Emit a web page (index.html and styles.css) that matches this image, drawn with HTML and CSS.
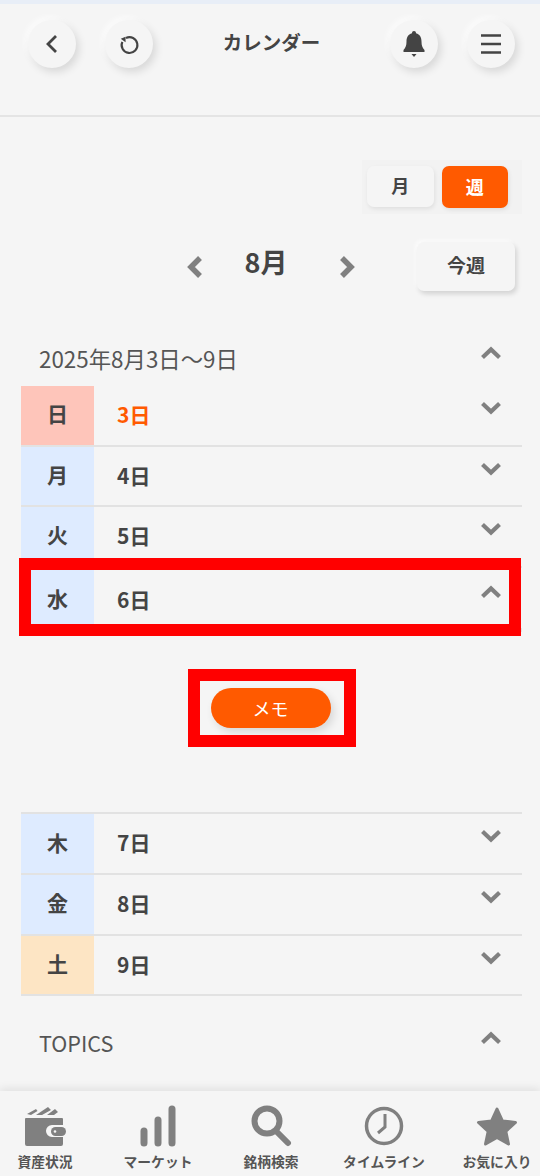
FILE: index.html
```html
<!DOCTYPE html>
<html lang="ja">
<head>
    <meta charset="UTF-8">
    <meta name="viewport" content="width=device-width, initial-scale=1.0">
    <title>カレンダー</title>
    <link rel="stylesheet" href="styles.css">
</head>
<body>
    <div class="top-strip"></div>
    <header class="header">
        <button class="round-btn">
            <svg width="16" height="22" viewBox="0 0 16 22"><path d="M12 3 4 11l8 8" fill="none" stroke="#444" stroke-width="2.800"/></svg>
        </button>
        <button class="round-btn">
            <svg width="21" height="21" viewBox="0 0 24 24"><path d="M8 4.600A9 9 0 1 1 3.800 9" fill="none" stroke="#444" stroke-width="2.400"/><path d="M2 5.500 7.500 3 7.500 9.500Z" fill="#444"/></svg>
        </button>
        <h1 class="title">カレンダー</h1>
        <button class="round-btn">
            <svg width="24" height="30" viewBox="0 0 24 30"><path d="M12 2c1.200 0 2 .8 2 2.200 4 1 5.500 4.300 5.500 8.300 0 4 .8 6 3 8.500v2H1.500v-2c2.200-2.500 3-4.500 3-8.500 0-4 1.500-7.300 5.500-8.300C10 2.800 10.800 2 12 2Z" fill="#444"/><path d="M9.500 25h5l-2.500 3Z" fill="#444"/></svg>
        </button>
        <button class="round-btn">
            <svg width="22" height="22" viewBox="0 0 22 22"><path d="M1 2.500h20M1 11h20M1 19.500h20" stroke="#444" stroke-width="2.400"/></svg>
        </button>
    </header>

    <main class="content">
        <div class="toggle">
            <div class="toggle-btn">月</div>
            <div class="toggle-btn active">週</div>
        </div>

        <div class="month-nav">
            <svg class="month-arrow" width="20" height="26" viewBox="0 0 20 26"><path d="M15 4 6 13l9 9" fill="none" stroke="#808080" stroke-width="5.500"/></svg>
            <div class="month">8月</div>
            <svg class="month-arrow next" width="20" height="26" viewBox="0 0 20 26"><path d="M5 4l9 9-9 9" fill="none" stroke="#808080" stroke-width="5.500"/></svg>
            <div class="this-week">今週</div>
        </div>

        <div class="section-head">
            <span>2025年8月3日〜9日</span>
            <svg class="chev" width="22" height="14" viewBox="0 0 22 14"><path d="M2.500 11.500 11 3.500l8.500 8" fill="none" stroke="#808080" stroke-width="4.200"/></svg>
        </div>

        <div class="days">
            <div class="day-row">
                <div class="day-cell sun">日</div>
                <div class="day-date orange">3日</div>
                <svg class="chev" width="22" height="14" viewBox="0 0 22 14"><path d="M2.500 2.500 11 10.500l8.500-8" fill="none" stroke="#808080" stroke-width="4.200"/></svg>
            </div>
            <div class="day-row">
                <div class="day-cell">月</div>
                <div class="day-date">4日</div>
                <svg class="chev" width="22" height="14" viewBox="0 0 22 14"><path d="M2.500 2.500 11 10.500l8.500-8" fill="none" stroke="#808080" stroke-width="4.200"/></svg>
            </div>
            <div class="day-row">
                <div class="day-cell">火</div>
                <div class="day-date">5日</div>
                <svg class="chev" width="22" height="14" viewBox="0 0 22 14"><path d="M2.500 2.500 11 10.500l8.500-8" fill="none" stroke="#808080" stroke-width="4.200"/></svg>
            </div>
            <div class="day-row open">
                <div class="day-cell">水</div>
                <div class="day-date">6日</div>
                <svg class="chev" width="22" height="14" viewBox="0 0 22 14"><path d="M2.500 11.500 11 3.500l8.500 8" fill="none" stroke="#808080" stroke-width="4.200"/></svg>
            </div>
            <div class="memo-panel">
                <div class="memo-btn">メモ</div>
            </div>
            <div class="day-row">
                <div class="day-cell">木</div>
                <div class="day-date">7日</div>
                <svg class="chev" width="22" height="14" viewBox="0 0 22 14"><path d="M2.500 2.500 11 10.500l8.500-8" fill="none" stroke="#808080" stroke-width="4.200"/></svg>
            </div>
            <div class="day-row">
                <div class="day-cell">金</div>
                <div class="day-date">8日</div>
                <svg class="chev" width="22" height="14" viewBox="0 0 22 14"><path d="M2.500 2.500 11 10.500l8.500-8" fill="none" stroke="#808080" stroke-width="4.200"/></svg>
            </div>
            <div class="day-row">
                <div class="day-cell sat">土</div>
                <div class="day-date">9日</div>
                <svg class="chev" width="22" height="14" viewBox="0 0 22 14"><path d="M2.500 2.500 11 10.500l8.500-8" fill="none" stroke="#808080" stroke-width="4.200"/></svg>
            </div>
            <div class="mark mark-row"></div>
            <div class="mark mark-memo"></div>
        </div>

        <div class="section-head topics">
            <span>TOPICS</span>
            <svg class="chev" width="22" height="14" viewBox="0 0 22 14"><path d="M2.500 11.500 11 3.500l8.500 8" fill="none" stroke="#808080" stroke-width="4.200"/></svg>
        </div>
    </main>

    <nav class="tabbar">
        <div class="tab">
            <svg width="44" height="42" viewBox="0 0 44 42"><path d="M4 9 13 4l1.500 2L8 10ZM13 10 25 2l3 3-9 5ZM24 10l8-6 3 3-4 3Z" fill="#808080"/><path d="M3 13h36a1 1 0 0 1 1 1v6H29a6 6 0 0 0 0 12h11v7a2 2 0 0 1-2 2H4a2 2 0 0 1-2-2V14a1 1 0 0 1 1-1Z" fill="#808080"/><rect x="28" y="22" width="15" height="9" rx="4.500" fill="#808080"/><circle cx="32" cy="26.500" r="1.300" fill="#f5f5f5"/></svg>
            <span>資産状況</span>
        </div>
        <div class="tab">
            <svg width="40" height="42" viewBox="0 0 40 42"><path d="M6 26v12M20 15v23M34 4v34" stroke="#808080" stroke-width="7" stroke-linecap="round"/></svg>
            <span>マーケット</span>
        </div>
        <div class="tab">
            <svg width="42" height="42" viewBox="0 0 42 42"><circle cx="17" cy="16" r="12.500" fill="none" stroke="#808080" stroke-width="6"/><path d="M26 26 38 38" stroke="#808080" stroke-width="6" stroke-linecap="round"/></svg>
            <span>銘柄検索</span>
        </div>
        <div class="tab">
            <svg width="42" height="42" viewBox="0 0 42 42"><circle cx="21" cy="21" r="17.500" fill="none" stroke="#808080" stroke-width="3.500"/><path d="M22 9v13l-7 6" fill="none" stroke="#808080" stroke-width="3"/></svg>
            <span>タイムライン</span>
        </div>
        <div class="tab">
            <svg width="44" height="42" viewBox="0 0 44 42"><path d="m22 4 5.500 12 13 1.500-9.700 8.800L33.500 39 22 32.500 10.500 39l2.700-12.700-9.700-8.800 13-1.500Z" fill="#808080" stroke="#808080" stroke-width="3" stroke-linejoin="round"/></svg>
            <span>お気に入り</span>
        </div>
    </nav>
</body>
</html>
```

FILE: styles.css
```css
* {
    box-sizing: border-box;
}
html, body {
    margin: 0;
    height: 100%;
}
body {
    display: flex;
    flex-direction: column;
    height: 1176px;
    overflow: hidden;
    background: #f5f5f5;
    color: #444;
    font-family: "Noto Sans CJK JP", "Noto Sans", sans-serif;
}
.top-strip {
    height: 4px;
    background: #e8eef7;
}
.header {
    display: flex;
    align-items: flex-start;
    gap: 29px;
    height: 113px;
    padding: 16px 25px 0 28px;
    border-bottom: 2px solid #e4e4e4;
}
.round-btn {
    display: flex;
    align-items: center;
    justify-content: center;
    flex: none;
    width: 48px;
    height: 48px;
    padding: 0;
    border: none;
    border-radius: 50%;
    background: #f5f5f5;
    box-shadow: 3px 4px 8px rgba(0, 0, 0, 0.12), -3px -3px 6px rgba(255, 255, 255, 0.7);
}
.title {
    flex: 1;
    margin: 0;
    font-size: 19.5px;
    font-weight: 700;
    line-height: 44px;
    text-align: center;
    white-space: nowrap;
}
.content {
    flex: 1;
    overflow: hidden;
}
.toggle {
    display: flex;
    gap: 8px;
    width: 160px;
    height: 54px;
    margin: 43px 18px 0 auto;
    padding: 6px 14px 6px 5px;
    background: #f2f2f2;
}
.toggle-btn {
    display: flex;
    align-items: center;
    justify-content: center;
    width: 67px;
    height: 41px;
    padding-bottom: 3px;
    border-radius: 7px;
    background: #f5f5f5;
    font-size: 18px;
    font-weight: 700;
    box-shadow: 1px 2px 4px rgba(0, 0, 0, 0.08);
}
.toggle-btn.active {
    height: 42px;
    background: #ff5a00;
    color: #fff;
}
.month-nav {
    display: flex;
    align-items: center;
    height: 49px;
    margin-top: 28px;
    padding-left: 185px;
}
.month-arrow.next {
    margin-left: 10px;
}
.month {
    width: 122px;
    padding-bottom: 10px;
    font-size: 27px;
    font-weight: 700;
    text-align: center;
}
.this-week {
    display: flex;
    align-items: center;
    justify-content: center;
    width: 98px;
    height: 49px;
    margin-left: 60px;
    padding-bottom: 5px;
    border-radius: 7px;
    background: #f5f5f5;
    font-size: 19px;
    font-weight: 700;
    box-shadow: 2px 3px 5px rgba(0, 0, 0, 0.14), -2px -2px 4px rgba(255, 255, 255, 0.7);
}
.section-head {
    display: flex;
    justify-content: space-between;
    height: 56px;
    margin-top: 39px;
    padding: 0 38px 0 39px;
    font-size: 22.4px;
    line-height: 56px;
    color: #555;
}
.section-head .chev {
    margin: 16px 0 0;
}
.section-head.topics {
    margin-top: 19px;
    font-size: 21.6px;
    line-height: 56px;
}
.chev {
    flex: none;
}
.days {
    position: relative;
    margin: 0 18px 0 21px;
    border-bottom: 2px solid #e2e2e2;
}
.day-row {
    display: flex;
    height: 60.6px;
    border-bottom: 2px solid #e2e2e2;
}
.day-row:nth-last-child(3) {
    height: 58.6px;
    border-bottom: none;
}
.day-row.open {
    height: 62.6px;
    padding-top: 0;
}
.day-cell {
    display: flex;
    align-items: center;
    justify-content: center;
    flex: none;
    width: 73px;
    padding-bottom: 4px;
    background: #deebff;
    font-size: 21px;
    font-weight: 700;
}
.day-cell.sun {
    background: #fec5ba;
}
.day-cell.sat {
    background: #fde5c4;
}
.day-date {
    flex: 1;
    padding-left: 23px;
    font-size: 21px;
    font-weight: 700;
    line-height: 56px;
}
.day-date.orange {
    color: #ff5a00;
}
.day-row .chev {
    margin: 15px 20px 0 0;
}
.open .day-cell {
    padding-bottom: 0;
}
.open .day-date {
    padding-top: 3px;
}
.day-row.open .chev {
    margin-top: 17px;
}
.memo-panel {
    display: flex;
    justify-content: center;
    height: 184px;
    padding: 56px 0 0 0;
    border-top: 2px solid #e2e2e2;
    border-bottom: 2px solid #e2e2e2;
}
.memo-btn {
    width: 120px;
    height: 40px;
    margin-right: 2px;
    border-radius: 20px;
    background: #ff5a00;
    color: #fff;
    font-size: 18px;
    font-weight: 400;
    line-height: 40px;
    text-align: center;
    box-shadow: 3px 4px 8px rgba(0, 0, 0, 0.12);
}
/* red annotation boxes over the list */
.mark {
    position: absolute;
    border: 12px solid #ff0000;
}
.mark-row {
    top: 172px;
    left: -2px;
    width: 502px;
    height: 78px;
}
.mark-memo {
    top: 283px;
    left: 167px;
    width: 168px;
    height: 78px;
}
.tabbar {
    display: flex;
    justify-content: space-between;
    flex: none;
    height: 85px;
    padding: 14px 12px 0 14px;
    background: #f5f5f5;
    box-shadow: 0 -3px 8px rgba(0, 0, 0, 0.08);
}
.tab {
    display: flex;
    flex-direction: column;
    align-items: center;
    width: 62px;
    white-space: nowrap;
    font-size: 13.8px;
    font-weight: 700;
    line-height: 18px;
    color: #555;
}
.tab svg {
    flex: none;
    margin-bottom: 5px;
}
```
